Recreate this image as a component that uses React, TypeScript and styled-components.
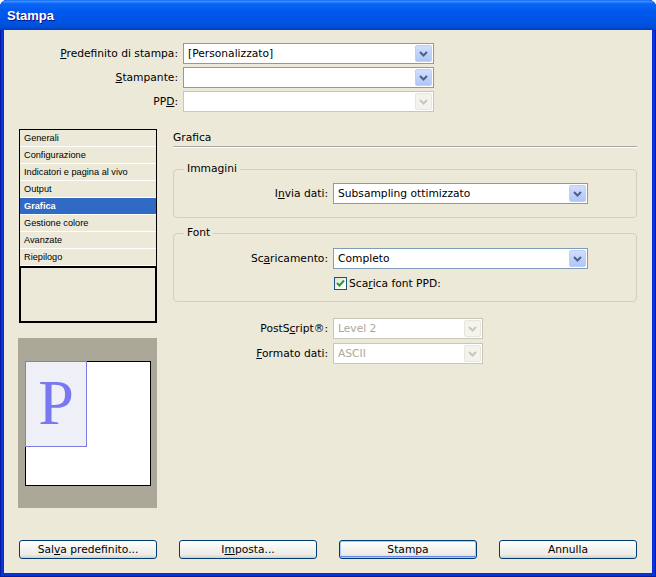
import React from 'react';
import styled, { createGlobalStyle, css } from 'styled-components';

const GlobalStyle = createGlobalStyle`
  html, body {
    margin: 0;
    padding: 0;
    background: #ffffff;
  }
  body {
    font-family: 'DejaVu Sans', Verdana, sans-serif;
    font-size: 10.7px;
    color: #000;
  }
`;

const Window = styled.div`
  width: 656px;
  height: 577px;
  display: flex;
  flex-direction: column;
  background: #0831d9;
  border-radius: 7px 7px 0 0;
  box-shadow: inset 0 0 0 1px #001ea0;
  overflow: hidden;
`;

const TitleBar = styled.div`
  flex: none;
  height: 30px;
  display: flex;
  align-items: center;
  padding-left: 7px;
  background: linear-gradient(
    to bottom,
    #0a5fea 0%,
    #3d95ff 4%,
    #0a66f6 12%,
    #0058ee 40%,
    #0054e3 70%,
    #0050d8 90%,
    #003dc0 100%
  );
  color: #fff;
  font-family: 'Liberation Sans', Arial, sans-serif;
  font-weight: bold;
  font-size: 13px;
  text-shadow: 1px 1px #0f1089;
`;

const Body = styled.div`
  flex: 1;
  margin: 0 4px 4px 4px;
  background: #ece9d8;
  display: flex;
  flex-direction: column;
`;

const Key = styled.span`
  text-decoration: underline;
  text-underline-offset: 1px;
`;

const TopForm = styled.div`
  margin-top: 13px;
  display: grid;
  grid-template-columns: 174px 251px;
  column-gap: 5px;
  row-gap: 3px;
`;

const Label = styled.label`
  justify-self: end;
  align-self: center;
  white-space: nowrap;
`;

const ComboBox = styled.div<{ $disabled?: boolean; $width?: number }>`
  height: 21px;
  box-sizing: border-box;
  width: ${p => (p.$width ? `${p.$width}px` : 'auto')};
  display: flex;
  align-items: center;
  padding: 1px;
  background: #fff;
  border: 1px solid ${p => (p.$disabled ? '#c9c7ba' : '#7f9db9')};
  color: ${p => (p.$disabled ? '#aca899' : '#000')};
`;

const ComboValue = styled.span`
  flex: 1;
  padding-left: 3px;
  white-space: nowrap;
  overflow: hidden;
`;

const ArrowButton = styled.span<{ $disabled?: boolean }>`
  flex: none;
  width: 17px;
  height: 17px;
  box-sizing: border-box;
  display: flex;
  align-items: center;
  justify-content: center;
  border-radius: 2px;
  ${p =>
    p.$disabled
      ? css`
          background: #f4f3ee;
          border: 1px solid #e8e6dc;
        `
      : css`
          background: linear-gradient(to bottom, #d2defb 0%, #c1d3fb 45%, #b0c6f5 100%);
          border: 1px solid #bacffa;
        `}
`;

type ComboProps = { value?: string; disabled?: boolean; width?: number };

const Combo: React.FC<ComboProps> = ({ value, disabled, width }) => (
  <ComboBox $disabled={disabled} $width={width}>
    <ComboValue>{value}</ComboValue>
    <ArrowButton $disabled={disabled}>
      <svg width="9" height="6" viewBox="0 0 9 6">
        <path
          d="M1 1 L4.5 4.5 L8 1"
          fill="none"
          stroke={disabled ? '#c9c7ba' : '#4d6185'}
          strokeWidth="2"
        />
      </svg>
    </ArrowButton>
  </ComboBox>
);

const Middle = styled.div`
  margin-top: 17px;
  display: flex;
  gap: 16px;
  padding: 0 15px;
`;

const LeftColumn = styled.div`
  flex: none;
  width: 138px;
  display: flex;
  flex-direction: column;
  gap: 15px;
`;

const List = styled.div`
  height: 194px;
  box-sizing: border-box;
  border: 1px solid #000;
  display: flex;
  flex-direction: column;
`;

const ListItem = styled.div<{ $selected?: boolean }>`
  flex: none;
  height: 16px;
  border-bottom: 1px solid #fff;
  padding-left: 4px;
  display: flex;
  align-items: center;
  font-family: 'Liberation Sans', Arial, sans-serif;
  font-size: 9.2px;
  white-space: nowrap;
  background: ${p => (p.$selected ? '#316ac5' : '#ece9d8')};
  color: ${p => (p.$selected ? '#fff' : '#000')};
  font-weight: ${p => (p.$selected ? 'bold' : 'normal')};
`;

const ListEmpty = styled.div`
  flex: 1;
  border-top: 1px solid #000;
  box-shadow: inset 0 0 0 1px #000;
`;

const Preview = styled.div`
  height: 170px;
  margin-left: -1px;
  box-sizing: border-box;
  background: #aca899;
  padding: 23px 6px 22px 7px;
  display: flex;
`;

const Page = styled.div`
  flex: 1;
  background: #fff;
  border: 1px solid #000;
  display: flex;
  align-items: flex-start;
`;

const PageTile = styled.div`
  width: 62px;
  height: 86px;
  margin: -1px 0 0 -1px;
  box-sizing: border-box;
  background: #efeff7;
  border: 1px solid #7c7ce0;
  display: flex;
  justify-content: center;
  padding-top: 13px;
  font-family: 'Liberation Serif', 'Times New Roman', serif;
  font-size: 64px;
  line-height: 56px;
  color: #7878ef;
`;

const RightColumn = styled.div`
  flex: 1;
  display: flex;
  flex-direction: column;
`;

const SectionHeader = styled.div`
  height: 18px;
  box-sizing: border-box;
  border-bottom: 1px solid #a7a6aa;
  box-shadow: 0 1px 0 #fff;
  padding-top: 2px;
  line-height: 14px;
`;

const Group = styled.fieldset<{ $top: number; $bottom: number }>`
  margin: ${p => p.$top}px 0 0 0;
  padding: 0 0 ${p => p.$bottom}px 0;
  border: 1px solid #d0d0bf;
  border-radius: 4px;
  min-width: 0;
`;

const Legend = styled.legend`
  margin-left: 10px;
  padding: 0 3px;
  line-height: 14px;
`;

const FieldGrid = styled.div<{ $labelWidth: number; $top: number }>`
  margin-top: ${p => p.$top}px;
  display: grid;
  grid-template-columns: ${p => p.$labelWidth}px auto;
  justify-content: start;
  column-gap: 5px;
  row-gap: 4px;
`;

const CheckRow = styled.div`
  grid-column: 2;
  margin-top: 4px;
  display: flex;
  align-items: center;
  gap: 2px;
  padding-left: 1px;
`;

const CheckBox = styled.span`
  width: 13px;
  height: 13px;
  box-sizing: border-box;
  border: 1px solid #1c5180;
  background: linear-gradient(135deg, #dcdcd7 0%, #ffffff 80%);
  display: flex;
  align-items: center;
  justify-content: center;
`;

const ButtonBar = styled.div`
  margin-top: auto;
  margin-bottom: 14px;
  padding: 0 15px;
  display: flex;
  gap: 22px;
`;

const Button = styled.button<{ $default?: boolean }>`
  width: 138px;
  height: 19px;
  box-sizing: border-box;
  padding: 0;
  border: 1px solid #003c74;
  border-radius: 3px;
  background: linear-gradient(to bottom, #ffffff 0%, #f4f4f0 40%, #ecebe6 80%, #d6d0c5 100%);
  font-family: 'DejaVu Sans', Verdana, sans-serif;
  font-size: 10.7px;
  color: #000;
  ${p =>
    p.$default &&
    css`
      box-shadow: inset 0 0 0 1px #aac8fa, inset 0 -1px 0 1px #6982ee;
    `}
`;

const items = [
  'Generali',
  'Configurazione',
  'Indicatori e pagina al vivo',
  'Output',
  'Grafica',
  'Gestione colore',
  'Avanzate',
  'Riepilogo',
];

export default function App() {
  return (
    <>
      <GlobalStyle />
      <Window>
        <TitleBar>Stampa</TitleBar>
        <Body>
          <TopForm>
            <Label>
              <Key>P</Key>redefinito di stampa:
            </Label>
            <Combo value="[Personalizzato]" />
            <Label>
              <Key>S</Key>tampante:
            </Label>
            <Combo value="" />
            <Label>
              PP<Key>D</Key>:
            </Label>
            <Combo value="" disabled />
          </TopForm>

          <Middle>
            <LeftColumn>
              <List>
                {items.map(item => (
                  <ListItem key={item} $selected={item === 'Grafica'}>
                    {item}
                  </ListItem>
                ))}
                <ListEmpty />
              </List>
              <Preview>
                <Page>
                  <PageTile>P</PageTile>
                </Page>
              </Preview>
            </LeftColumn>

            <RightColumn>
              <SectionHeader>Grafica</SectionHeader>

              <Group $top={15} $bottom={13}>
                <Legend>Immagini</Legend>
                <FieldGrid $labelWidth={154} $top={7}>
                  <Label>
                    I<Key>n</Key>via dati:
                  </Label>
                  <Combo value="Subsampling ottimizzato" width={255} />
                </FieldGrid>
              </Group>

              <Group $top={8} $bottom={11}>
                <Legend>Font</Legend>
                <FieldGrid $labelWidth={154} $top={8}>
                  <Label>
                    Sc<Key>a</Key>ricamento:
                  </Label>
                  <Combo value="Completo" width={255} />
                  <CheckRow>
                    <CheckBox>
                      <svg width="9" height="9" viewBox="0 0 9 9">
                        <path d="M1 4 L3.5 6.5 L8 1.5" fill="none" stroke="#21a121" strokeWidth="2" />
                      </svg>
                    </CheckBox>
                    <span>
                      Sca<Key>r</Key>ica font PPD:
                    </span>
                  </CheckRow>
                </FieldGrid>
              </Group>

              <FieldGrid $labelWidth={155} $top={16}>
                <Label>
                  PostS<Key>c</Key>ript®:
                </Label>
                <Combo value="Level 2" disabled width={150} />
                <Label>
                  <Key>F</Key>ormato dati:
                </Label>
                <Combo value="ASCII" disabled width={150} />
              </FieldGrid>
            </RightColumn>
          </Middle>

          <ButtonBar>
            <Button>
              Sal<Key>v</Key>a predefinito...
            </Button>
            <Button>
              I<Key>m</Key>posta...
            </Button>
            <Button $default>Stampa</Button>
            <Button>Annulla</Button>
          </ButtonBar>
        </Body>
      </Window>
    </>
  );
}
